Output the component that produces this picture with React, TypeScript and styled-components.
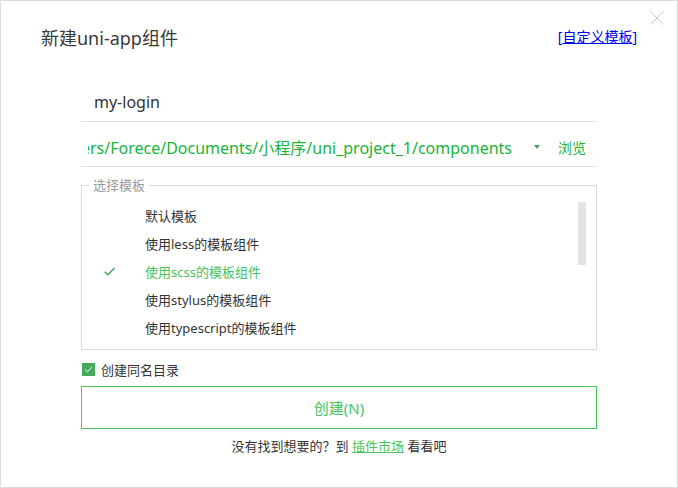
import React from 'react';
import styled, { createGlobalStyle } from 'styled-components';

const GlobalStyle = createGlobalStyle`
	html, body {
		margin: 0;
		padding: 0;
		background: #ffffff;
	}
	body {
		font-family: "Noto Sans", "Noto Sans CJK SC", sans-serif;
		color: #333333;
	}
`;

const GREEN = '#19b43a';
const SOFT_GREEN = '#46c35c';

const Window = styled.div`
	position: relative;
	width: 678px;
	height: 488px;
	box-sizing: border-box;
	border: 1px solid #dcdcdc;
	background: #ffffff;
	display: flex;
	flex-direction: column;
`;

const CloseButton = styled.button`
	position: absolute;
	top: 9px;
	right: 12px;
	width: 16px;
	height: 16px;
	padding: 0;
	border: none;
	background: transparent;
	cursor: pointer;
	display: flex;
`;

const Header = styled.div`
	height: 74px;
	box-sizing: border-box;
	padding: 24px 40px 0 40px;
	display: flex;
	justify-content: space-between;
	align-items: flex-start;
`;

const Title = styled.h1`
	margin: 0;
	font-size: 18px;
	font-weight: normal;
	line-height: 26px;
	color: #3a3a3a;
`;

const CustomLink = styled.a`
	margin-top: 2px;
	font-size: 14px;
	line-height: 20px;
	color: #0000ee;
	text-decoration: none;
	& span {
		text-decoration: underline;
	}
`;

const Body = styled.div`
	padding: 0 80px;
	display: flex;
	flex-direction: column;
`;

const FieldRow = styled.div<{ $height: number; $top: number }>`
	height: ${({ $height }) => $height}px;
	box-sizing: border-box;
	padding-top: ${({ $top }) => $top}px;
	border-bottom: 1px solid #e2e2e2;
	display: flex;
	align-items: center;
`;

const NameValue = styled.div`
	padding-left: 13px;
	font-size: 16px;
	color: #333333;
`;

const PathClip = styled.div`
	margin-left: 7px;
	width: 424px;
	overflow: hidden;
	display: flex;
	justify-content: flex-end;
	white-space: nowrap;
	font-size: 16px;
	color: ${GREEN};
`;

const Caret = styled.span`
	margin-left: 22px;
	width: 0;
	height: 0;
	border-left: 3px solid transparent;
	border-right: 3px solid transparent;
	border-top: 4px solid #4c9e5e;
`;

const Browse = styled.span`
	margin-left: 18px;
	font-size: 14px;
	color: ${GREEN};
`;

const TemplateBox = styled.fieldset`
	margin: 10px 0 0 0;
	padding: 0;
	border: 1px solid #dadada;
	min-width: 0;
`;

const Legend = styled.legend`
	margin-left: 7px;
	padding: 0 4px;
	font-size: 13px;
	line-height: 16px;
	color: #9a9a9a;
`;

const TemplateList = styled.div`
	position: relative;
	height: 156px;
	box-sizing: border-box;
	padding-top: 8px;
	overflow: hidden;
`;

const TemplateItem = styled.div<{ $active?: boolean }>`
	height: 28px;
	display: flex;
	align-items: center;
	font-size: 13px;
	color: ${({ $active }) => ($active ? SOFT_GREEN : '#333333')};
`;

const CheckSlot = styled.span`
	width: 63px;
	padding-left: 21px;
	box-sizing: border-box;
	display: flex;
	align-items: center;
`;

const ScrollThumb = styled.div`
	position: absolute;
	top: 9px;
	right: 10px;
	width: 8px;
	height: 63px;
	background: #e4e4e4;
`;

const CheckRow = styled.label`
	margin-top: 9px;
	height: 20px;
	display: flex;
	align-items: center;
	gap: 6px;
	padding-left: 1px;
	font-size: 13px;
	color: #333333;
`;

const CheckBox = styled.span`
	width: 13px;
	height: 13px;
	background: #45a95e;
	display: flex;
	align-items: center;
	justify-content: center;
`;

const CreateButton = styled.button`
	margin-top: 7px;
	height: 43px;
	box-sizing: border-box;
	border: 1px solid #4cc75e;
	background: #ffffff;
	font-family: inherit;
	font-size: 15px;
	color: ${SOFT_GREEN};
	cursor: pointer;
`;

const Footer = styled.div`
	margin-top: 8px;
	line-height: 18px;
	font-size: 13px;
	text-align: center;
	color: #333333;
`;

const MarketLink = styled.a`
	color: ${SOFT_GREEN};
	text-decoration: underline;
`;

const templates = [
	'默认模板',
	'使用less的模板组件',
	'使用scss的模板组件',
	'使用stylus的模板组件',
	'使用typescript的模板组件'
];

const Tick = (props: { color: string; size: number }) => (
	<svg width={props.size} height={props.size} viewBox="0 0 12 12">
		<path d="M1.5 6.2 L4.6 9 L10.5 2.8" fill="none" stroke={props.color} strokeWidth="1.3"/>
	</svg>
);

export default function App() {
	return <>
		<GlobalStyle/>
		<Window>
			<CloseButton aria-label="close">
				<svg width="16" height="16" viewBox="0 0 16 16">
					<path d="M1.5 1.5 L14.5 14.5 M14.5 1.5 L1.5 14.5" stroke="#c9c9c9" strokeWidth="1"/>
				</svg>
			</CloseButton>
			<Header>
				<Title>新建uni-app组件</Title>
				<CustomLink href="#">[<span>自定义模板</span>]</CustomLink>
			</Header>
			<Body>
				<FieldRow $height={47} $top={8}>
					<NameValue>my-login</NameValue>
				</FieldRow>
				<FieldRow $height={45} $top={5}>
					<PathClip>C:/Users/Forece/Documents/小程序/uni_project_1/components</PathClip>
					<Caret/>
					<Browse>浏览</Browse>
				</FieldRow>
				<TemplateBox>
					<Legend>选择模板</Legend>
					<TemplateList>
						{templates.map((name, i) => (
							<TemplateItem key={name} $active={i === 2}>
								<CheckSlot>{i === 2 && <Tick color="#3daa55" size={13}/>}</CheckSlot>
								{name}
							</TemplateItem>
						))}
						<ScrollThumb/>
					</TemplateList>
				</TemplateBox>
				<CheckRow>
					<CheckBox><Tick color="#ffffff" size={9}/></CheckBox>
					创建同名目录
				</CheckRow>
				<CreateButton>创建(N)</CreateButton>
				<Footer>
					没有找到想要的？到 <MarketLink href="#">插件市场</MarketLink> 看看吧
				</Footer>
			</Body>
		</Window>
	</>;
}
